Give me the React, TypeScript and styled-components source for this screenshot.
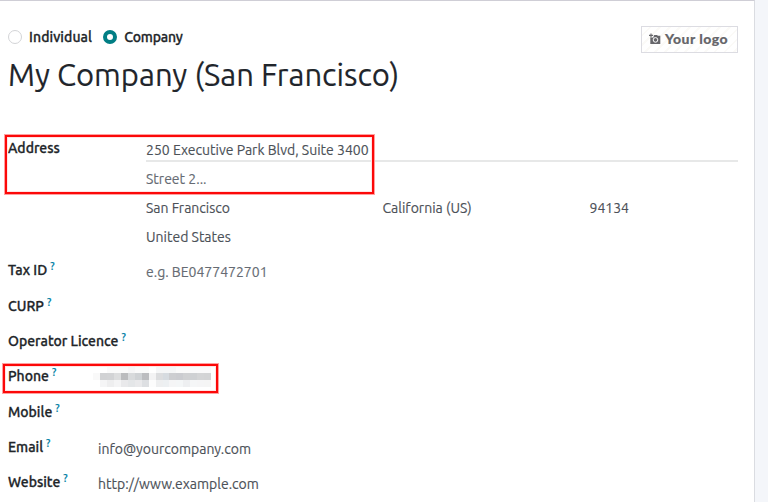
import React from "react";
import styled, { createGlobalStyle } from "styled-components";

const GlobalStyle = createGlobalStyle`
  * { box-sizing: border-box; }
  body { margin: 0; background: #f4f6fa; overflow: hidden; }
`;

const Page = styled.div`
  display: flex;
  height: 502px;
  background: #f4f6fa;
  font: 400 14px/20px Ubuntu, "Noto Sans", "Open Sans", sans-serif;
  color: #4c5158;
  -webkit-text-stroke: 0.15px;
`;

const Sheet = styled.main`
  display: flex;
  flex-direction: column;
  width: 755px;
  padding: 26px 16px 0 8px;
  background: #fff;
  border-top: 1px solid #cfced6;
  border-right: 1px solid #dadce1;
`;

const Header = styled.header`
  display: flex;
  justify-content: space-between;
  height: 106px;
`;

const RadioGroup = styled.div`
  display: flex;
  align-items: center;
  height: 20px;
`;

const Radio = styled.span<{ $checked?: boolean }>`
  width: 14px;
  height: 14px;
  border: ${(p) => (p.$checked ? "4px solid #017e84" : "1px solid #d3d4d7")};
  border-radius: 50%;
  background: #fff;
`;

const Text = styled.span`
  white-space: pre;
`;

const Label = styled(Text)`
  font-weight: 500;
  color: #212529;
  -webkit-text-stroke: 0.3px;
`;

const RadioLabel = styled(Label)`
  margin: 0 11px 0 7px;
`;

const IndividualLabel = styled(RadioLabel)`
  letter-spacing: 0.1px;
`;

const CompanyLabel = styled(RadioLabel)`
  letter-spacing: -0.15px;
`;

const Title = styled.h1`
  margin: 8px 0 0 0;
  font-size: 31px;
  font-weight: 400;
  line-height: 40px;
  color: #21252b;
  white-space: nowrap;
`;

const Logo = styled.div`
  display: flex;
  align-items: center;
  width: 97px;
  height: 27px;
  margin-top: -1px;
  padding-left: 8px;
  border: 1px solid #dcdce2;
  background: repeating-linear-gradient(135deg, #fff 0 5px, #fbfaf7 5px 7px);
  font: 900 14px/20px Lato, sans-serif;
  letter-spacing: 0.45px;
  color: #66666a;
  white-space: pre;

  svg { margin: -2px 4px 0 -1px; }
`;

const LogoText = styled.span`
  margin-top: -2px;
`;

const AddressRow = styled.section`
  position: relative;
  display: flex;
  height: 127px;
  padding-top: 5px;
`;

const AddressLabel = styled(Label)`
  width: 138px;
`;

const AddressFields = styled.div`
  flex: 1;
  padding-top: 2px;
`;

const Line = styled.div`
  display: grid;
  grid-template-columns: 236.5px 207px 1fr;
  height: 29px;
`;

const StreetLine = styled(Line)`
  height: 22px;
  margin-bottom: 7px;
  border-bottom: 2px solid #e7e8e8;
`;

const Placeholder = styled(Text)`
  color: #666b73;
`;

const Highlight = styled.div`
  position: absolute;
  border: 2px solid #fc0808;
  box-shadow: 0 0 0 1px #ffa0a0, inset 0 0 0 1px #ffe4e4;
  pointer-events: none;
`;

const AddressHighlight = styled(Highlight)`
  top: 2px;
  left: -3px;
  width: 369px;
  height: 59px;
`;

const PhoneHighlight = styled(Highlight)`
  top: -2px;
  left: -5px;
  width: 215px;
  height: 29px;
`;

const Fields = styled.section`
  display: grid;
  grid-template-rows: 36px 35px 35px 36px 35px 35px 30px;
`;

const Field = styled.div<{ $wide?: boolean }>`
  position: relative;
  display: grid;
  grid-template-columns: ${(p) => (p.$wide ? 138 : 90)}px 1fr;
`;

const LabelCell = styled.div`
  display: flex;
  white-space: nowrap;
`;

const Help = styled.sup`
  margin: -3px 0 0 3px;
  font-size: 10.5px;
  font-weight: 500;
  line-height: 18px;
  color: #0180a5;
`;

const Value = styled.div`
  padding-top: 2px;
`;

const Redaction = styled.svg`
  display: block;
`;

const CameraIcon = () => (
  <svg width="12" height="12" viewBox="0 0 12 12" fill="none">
    <path d="M4.6 2.8 5.4 1.9H8L8.9 2.8H11.3V11H1.3V4.6L4.6 4.4Z" fill="#66666a" />
    <path d="M0 2.4H4M2 .4V4.4" stroke="#66666a" strokeWidth="1.1" />
    <circle cx="6.5" cy="6.9" r="2.3" stroke="#fff" strokeWidth="1" />
  </svg>
);

const mosaic: string[][] = [
  ["#fff", "#fff", "#fafafa", "#fafafa", "#fafafa", "#f6f6f7", "#fafafa", "#fafafa", "#fff", "#f5f6f7", "#f5f6f7", "#f5f6f7", "#fafafa", "#fafafa", "#fafafa", "#fafafa", "#fafafa"],
  ["#f9f9f9", "#d1d2d4", "#d2d3d5", "#dcddde", "#bbbcbe", "#d8dadc", "#cfd2d5", "#bcbdc0", "#f3f3f4", "#dcdddf", "#d6dbe0", "#cdced1", "#cbccd0", "#d0d1d3", "#cfd1d3", "#d4d5d6", "#d3d4d5"],
  ["#fff", "#f5f5f6", "#eeeeef", "#f4f4f5", "#e9e9eb", "#e4e6e8", "#e9e9eb", "#dddfe2", "#fcfcfc", "#eeeff0", "#edf0f2", "#f5f5f6", "#f4f6f7", "#eeeff1", "#f5f6f7", "#f5f5f6", "#f5f5f5"],
];

const PhoneMosaic = () => (
  <Redaction width="120" height="20" viewBox="0 0 120 20" overflow="visible" shapeRendering="crispEdges">
    {mosaic.map((row, y) =>
      row.map((fill, x) => (
        <rect key={`${y}-${x}`} x={-5 + x * 6.95} y={y * 7 - 2} width="7" height="7" fill={fill} />
      )),
    )}
  </Redaction>
);

type FieldRowProps = {
  label: string;
  wide?: boolean;
  overlay?: React.ReactNode;
  children?: React.ReactNode;
};

const FieldRow = ({ label, wide, overlay, children }: FieldRowProps) => (
  <Field $wide={wide}>
    <LabelCell>
      <Label>{label}</Label>
      <Help>?</Help>
    </LabelCell>
    <Value>{children}</Value>
    {overlay}
  </Field>
);

export default function App() {
  return (
    <Page>
      <GlobalStyle />
      <Sheet>
        <Header>
          <div>
            <RadioGroup>
              <Radio />
              <IndividualLabel>Individual</IndividualLabel>
              <Radio $checked />
              <CompanyLabel>Company</CompanyLabel>
            </RadioGroup>
            <Title>My Company (San Francisco)</Title>
          </div>
          <Logo>
            <CameraIcon />
            <LogoText>Your logo</LogoText>
          </Logo>
        </Header>
        <AddressRow>
          <AddressLabel>Address</AddressLabel>
          <AddressFields>
            <StreetLine>
              <Text>250 Executive Park Blvd, Suite 3400</Text>
            </StreetLine>
            <Line>
              <Placeholder>Street 2...</Placeholder>
            </Line>
            <Line>
              <Text>San Francisco</Text>
              <Text>California (US)</Text>
              <Text>94134</Text>
            </Line>
            <Line>
              <Text>United States</Text>
            </Line>
          </AddressFields>
          <AddressHighlight />
        </AddressRow>
        <Fields>
          <FieldRow label="Tax ID" wide>
            <Placeholder>e.g. BE0477472701</Placeholder>
          </FieldRow>
          <FieldRow label="CURP" />
          <FieldRow label="Operator Licence" wide />
          <FieldRow label="Phone" overlay={<PhoneHighlight />}>
            <PhoneMosaic />
          </FieldRow>
          <FieldRow label="Mobile" />
          <FieldRow label="Email">
            <Text>info@yourcompany.com</Text>
          </FieldRow>
          <FieldRow label="Website">
            <Text>http://www.example.com</Text>
          </FieldRow>
        </Fields>
      </Sheet>
    </Page>
  );
}
